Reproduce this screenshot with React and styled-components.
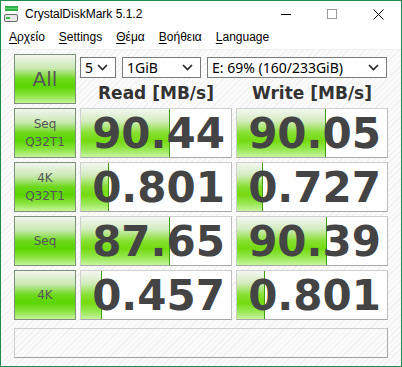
import React from 'react'
import styled, { createGlobalStyle } from 'styled-components'

const GlobalStyle = createGlobalStyle`
  html, body { margin: 0; padding: 0; background: #fff; }
  body { font-family: "Liberation Sans", "DejaVu Sans", sans-serif; }
`

const Window = styled.div`
  width: 402px;
  height: 367px;
  box-sizing: border-box;
  border: 1px solid #1e8c50;
  display: flex;
  flex-direction: column;
  background-color: #fbfbfb;
  background-image: repeating-linear-gradient(
    -45deg,
    #f1f1f1 0px,
    #f1f1f1 1px,
    transparent 1px,
    transparent 4px
  );
  overflow: hidden;
  & > * { flex-shrink: 0; }
`

const TitleBar = styled.div`
  height: 26px;
  background: #fff;
  display: flex;
  align-items: center;
  padding-left: 3px;
`

const Title = styled.span`
  font-family: "Liberation Sans", sans-serif;
  font-size: 12px;
  color: #000;
  margin-left: 6px;
  flex: 1;
`

const CaptionButton = styled.div`
  width: 46px;
  height: 26px;
  display: flex;
  align-items: center;
  justify-content: center;
`

const MenuBar = styled.div`
  box-sizing: border-box;
  height: 23px;
  padding: 0 0 3px 8px;
  background: #fff;
  border-bottom: 1px solid #f0f0f0;
  display: flex;
  align-items: center;
  gap: 14px;
`

const MenuItem = styled.span`
  font-family: "Liberation Sans", sans-serif;
  font-size: 12px;
  color: #000;
  u { text-decoration-thickness: 1px; text-underline-offset: 2px; }
`

const Body = styled.div`
  padding: 4px 13px 0 13px;
  display: grid;
  grid-template-columns: 62px 152px 152px;
  grid-template-rows: repeat(5, 50px) 34px;
  gap: 4px;
`

const GreenButton = styled.div`
  box-sizing: border-box;
  border: 1px solid #7c907a;
  background: linear-gradient(
    to bottom,
    #f2f5f0 0%,
    #c8e8b0 28%,
    #6cd81a 50%,
    #5ad400 66%,
    #8ae440 84%,
    #c6f49a 100%
  );
  display: flex;
  flex-direction: column;
  align-items: center;
  justify-content: center;
  color: #555;
  font-family: "DejaVu Sans", sans-serif;
  font-size: ${p => (p.$big ? '20px' : '12px')};
  line-height: ${p => (p.$big ? '1' : '18px')};
`

const Controls = styled.div`
  grid-column: 2 / 4;
  display: flex;
  flex-direction: column;
`

const SelectRow = styled.div`
  display: flex;
  gap: 6px;
  margin-top: 3px;
  height: 21px;
`

const Select = styled.div`
  box-sizing: border-box;
  width: ${p => p.$w}px;
  height: 21px;
  border: 1px solid #7a7a7a;
  background: #fff;
  display: flex;
  align-items: center;
  justify-content: space-between;
  padding: 0 7px 0 4px;
  font-family: "Noto Sans", sans-serif;
  font-size: 14px;
  color: #000;
`

const Headers = styled.div`
  display: grid;
  grid-template-columns: 152px 152px;
  gap: 4px;
  margin-top: 3px;
`

const Header = styled.div`
  text-align: center;
  font-family: "DejaVu Sans", sans-serif;
  font-weight: bold;
  font-size: 17px;
  color: #333;
  line-height: 24px;
`

const ValueBox = styled.div`
  position: relative;
  box-sizing: border-box;
  border: 1px solid #cfcfcf;
  border-bottom-color: #a8a8a8;
  border-right-color: #bdbdbd;
  background: #fff;
  overflow: hidden;
`

const Bar = styled.div`
  position: absolute;
  left: 0;
  top: 0;
  bottom: 0;
  border-right: 1px solid #3f9e10;
  background: linear-gradient(
    to bottom,
    #f4f7f2 0%,
    #d4ecc0 25%,
    #86e030 50%,
    #74da10 66%,
    #96e850 84%,
    #c8f4a0 100%
  );
`

const Value = styled.div`
  position: relative;
  height: 100%;
  display: flex;
  align-items: center;
  justify-content: flex-end;
  padding-right: 6px;
  font-family: "DejaVu Sans", sans-serif;
  font-weight: bold;
  font-size: 42px;
  color: #444;
`

const Comment = styled.div`
  grid-column: 1 / 4;
  margin-top: 4px;
  height: 30px;
  box-sizing: border-box;
  border: 1px solid #cfcfcf;
  border-bottom-color: #a0a0a0;
  border-right-color: #a8a8a8;
`

const Chevron = () => (
  <svg width="11" height="7" viewBox="0 0 11 7">
    <path d="M1 1 L5.5 5.5 L10 1" fill="none" stroke="#222" strokeWidth="1.6" />
  </svg>
)

const AppIcon = () => (
  <svg width="15" height="17" viewBox="0 0 15 17">
    <rect x="1" y="0" width="13" height="5" fill="#2fb24a" />
    <rect x="1" y="2" width="13" height="1" fill="#5ad06c" />
    <rect x="0.5" y="8.5" width="13" height="7" rx="1.5" fill="#e8e8e8" stroke="#6a6a6a" />
    <rect x="2" y="11" width="4" height="2" fill="#3ab54a" />
  </svg>
)

const rows = [
  { label: ['Seq', 'Q32T1'], read: '90.44', rw: 88, write: '90.05', ww: 88 },
  { label: ['4K', 'Q32T1'], read: '0.801', rw: 27, write: '0.727', ww: 25 },
  { label: ['Seq'], read: '87.65', rw: 88, write: '90.39', ww: 89 },
  { label: ['4K'], read: '0.457', rw: 20, write: '0.801', ww: 27 },
]

const Cell = ({ value, width }) => (
  <ValueBox>
    <Bar style={{ width }} />
    <Value>{value}</Value>
  </ValueBox>
)

const App = () => (
  <>
    <GlobalStyle />
    <Window>
      <TitleBar>
        <AppIcon />
        <Title>CrystalDiskMark 5.1.2</Title>
        <CaptionButton>
          <svg width="10" height="10"><rect x="0" y="5" width="10" height="1" fill="#000" /></svg>
        </CaptionButton>
        <CaptionButton>
          <svg width="10" height="10"><rect x="0.5" y="0.5" width="9" height="9" fill="none" stroke="#999" /></svg>
        </CaptionButton>
        <CaptionButton>
          <svg width="11" height="11"><path d="M0.5 0.5 L10.5 10.5 M10.5 0.5 L0.5 10.5" stroke="#000" strokeWidth="1" /></svg>
        </CaptionButton>
      </TitleBar>
      <MenuBar>
        <MenuItem><u>Α</u>ρχείο</MenuItem>
        <MenuItem><u>S</u>ettings</MenuItem>
        <MenuItem><u>Θ</u>έμα</MenuItem>
        <MenuItem><u>Β</u>οήθεια</MenuItem>
        <MenuItem><u>L</u>anguage</MenuItem>
      </MenuBar>
      <Body>
        <GreenButton $big>All</GreenButton>
        <Controls>
          <SelectRow>
            <Select $w={36}>5<Chevron /></Select>
            <Select $w={79}>1GiB<Chevron /></Select>
            <Select $w={180}>E: 69% (160/233GiB)<Chevron /></Select>
          </SelectRow>
          <Headers>
            <Header>Read [MB/s]</Header>
            <Header>Write [MB/s]</Header>
          </Headers>
        </Controls>
        {rows.map((r, i) => (
          <React.Fragment key={i}>
            <GreenButton>
              {r.label.map(l => <span key={l}>{l}</span>)}
            </GreenButton>
            <Cell value={r.read} width={r.rw} />
            <Cell value={r.write} width={r.ww} />
          </React.Fragment>
        ))}
        <Comment />
      </Body>
    </Window>
  </>
)

export default App
